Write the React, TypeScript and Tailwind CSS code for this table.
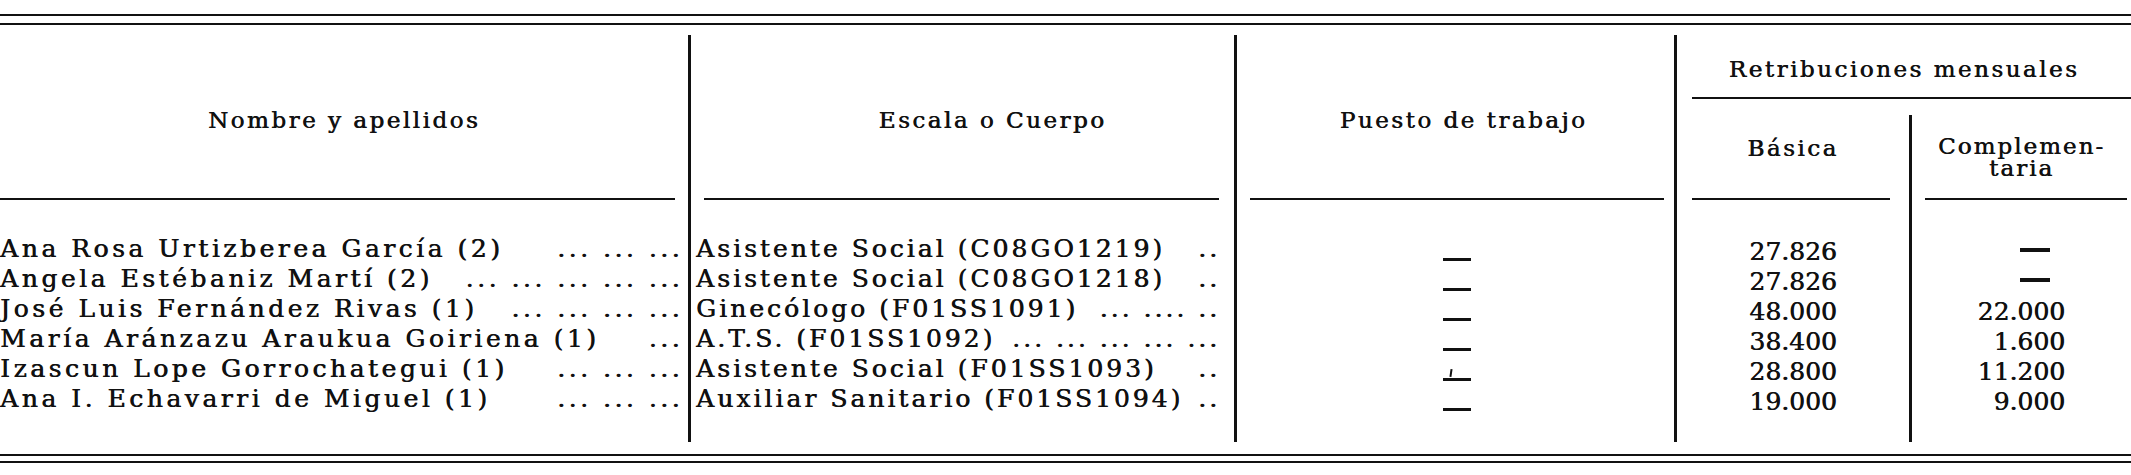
import React from 'react';

type Row = {
  name: string;
  nameDots: string;
  scale: string;
  scaleDots: string;
  basic: string;
  extra: string | null;
};

const rows: Row[] = [
  { name: 'Ana Rosa Urtizberea García (2)', nameDots: '... ... ...', scale: 'Asistente Social (C08GO1219)', scaleDots: '..', basic: '27.826', extra: null },
  { name: 'Angela Estébaniz Martí (2)', nameDots: '... ... ... ... ...', scale: 'Asistente Social (C08GO1218)', scaleDots: '..', basic: '27.826', extra: null },
  { name: 'José Luis Fernández Rivas (1)', nameDots: '... ... ... ...', scale: 'Ginecólogo (F01SS1091)', scaleDots: '... .... ..', basic: '48.000', extra: '22.000' },
  { name: 'María Aránzazu Araukua Goiriena (1)', nameDots: '...', scale: 'A.T.S. (F01SS1092)', scaleDots: '... ... ... ... ...', basic: '38.400', extra: '1.600' },
  { name: 'Izascun Lope Gorrochategui (1)', nameDots: '... ... ...', scale: 'Asistente Social (F01SS1093)', scaleDots: '..', basic: '28.800', extra: '11.200' },
  { name: 'Ana I. Echavarri de Miguel (1)', nameDots: '... ... ...', scale: 'Auxiliar Sanitario (F01SS1094)', scaleDots: '..', basic: '19.000', extra: '9.000' },
];

const Rule = ({ className = '' }: { className?: string }) => (
  <div className={`h-[2px] bg-[#111] ${className}`} />
);

export default function App() {
  return (
    <div className="w-[2131px] h-[475px] bg-white text-[#111] font-['DejaVu_Serif',serif] [text-shadow:0.6px_0_0_#111] overflow-hidden">
      {/* top double rule */}
      <div className="pt-[14px]">
        <Rule />
        <div className="h-[7px]" />
        <Rule />
      </div>

      <div className="grid grid-cols-[688px_546px_440px_457px] h-[407px] mt-[10px]">
        {/* Nombre y apellidos */}
        <div className="flex flex-col">
          <div className="h-[163px] flex items-center justify-center pt-[8px] text-[23px] tracking-[2.5px]">
            Nombre y apellidos
          </div>
          <Rule className="mr-[13px]" />
          <div className="pt-[34px] text-[25px] tracking-[3.5px] leading-[30px] pr-[5px]">
            {rows.map((r) => (
              <div key={r.name} className="flex justify-between h-[30px] whitespace-nowrap">
                <span>{r.name}</span>
                <span>{r.nameDots}</span>
              </div>
            ))}
          </div>
        </div>

        {/* Escala o Cuerpo */}
        <div className="flex flex-col border-l-[3px] border-[#111]">
          <div className="h-[163px] flex items-center justify-center pt-[8px] pl-[60px] text-[23px] tracking-[2.5px]">
            Escala o Cuerpo
          </div>
          <Rule className="ml-[13px] mr-[15px]" />
          <div className="pt-[34px] text-[25px] tracking-[3px] leading-[30px] pl-[5px] pr-[14px]">
            {rows.map((r) => (
              <div key={r.scale} className="flex justify-between h-[30px] whitespace-nowrap">
                <span>{r.scale}</span>
                <span>{r.scaleDots}</span>
              </div>
            ))}
          </div>
        </div>

        {/* Puesto de trabajo */}
        <div className="flex flex-col border-l-[3px] border-[#111]">
          <div className="h-[163px] flex items-center justify-center pt-[8px] pl-[16px] text-[23px] tracking-[2.5px]">
            Puesto de trabajo
          </div>
          <Rule className="ml-[13px] mr-[10px]" />
          <div className="pt-[34px]">
            {rows.map((r, i) => (
              <div key={r.name} className="h-[30px] flex justify-center items-start pt-[24px] pl-[3px]">
                <span className="relative block w-[28px] h-[3px] bg-[#111]">
                  {i === 4 && (
                    <span className="absolute left-[7px] bottom-[4px] w-[2px] h-[8px] bg-[#111] rotate-[8deg]" />
                  )}
                </span>
              </div>
            ))}
          </div>
        </div>

        {/* Retribuciones mensuales */}
        <div className="flex flex-col border-l-[3px] border-[#111]">
          <div className="pt-[21px] text-center text-[23px] leading-[26px] tracking-[2.5px]">
            Retribuciones mensuales
          </div>
          <Rule className="mt-[15px] ml-[15px]" />
          <div className="grid grid-cols-[232px_222px] flex-1 mt-[16px]">
            <div className="flex flex-col">
              <div className="h-[83px] pt-[20px] text-center text-[23px] leading-[26px] tracking-[2.5px]">
                Básica
              </div>
              <Rule className="ml-[15px] mr-[19px]" />
              <div className="pt-[37px] text-[25px] leading-[30px]">
                {rows.map((r) => (
                  <div key={r.name} className="h-[30px] text-center">
                    {r.basic}
                  </div>
                ))}
              </div>
            </div>
            <div className="flex flex-col border-l-[3px] border-[#111]">
              <div className="h-[83px] pt-[20px] text-center text-[23px] leading-[22px] tracking-[2px]">
                <div>Complemen-</div>
                <div>taria</div>
              </div>
              <Rule className="ml-[13px] mr-[4px]" />
              <div className="pt-[37px] text-[25px] leading-[30px] pr-[66px]">
                {rows.map((r) => (
                  <div key={r.name} className="h-[30px] flex justify-end items-center">
                    {r.extra ? (
                      <span>{r.extra}</span>
                    ) : (
                      <span className="block w-[30px] h-[4px] bg-[#111] mr-[15px] -mt-[4px]" />
                    )}
                  </div>
                ))}
              </div>
            </div>
          </div>
        </div>
      </div>

      {/* bottom double rule */}
      <div className="mt-[12px]">
        <Rule />
        <div className="h-[5px]" />
        <Rule />
      </div>
    </div>
  );
}
